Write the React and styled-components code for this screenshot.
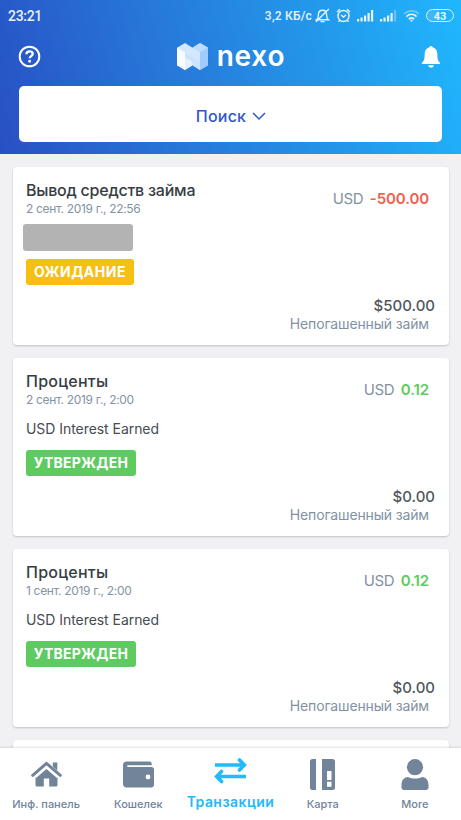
import React from "react";
import styled, { createGlobalStyle } from "styled-components";

const Global = createGlobalStyle`
  * { box-sizing: border-box; }
  html, body { margin: 0; padding: 0; overflow: hidden; }
  svg { display: block; flex: none; }
`;

const Screen = styled.div`
  width: 461px;
  height: 820px;
  overflow: hidden;
  display: flex;
  flex-direction: column;
  background: #f1f1f3;
  font-family: Inter, "Noto Sans", sans-serif;
  white-space: nowrap;
`;

const Header = styled.header`
  flex: none;
  height: 154px;
  background: linear-gradient(74deg, #2850c4 0%, #2778d9 38%, #2398ea 70%, #20b7fd 100%);
  color: #fff;
`;

const StatusBar = styled.div`
  height: 31px;
  padding: 0 7px 0 8px;
  display: flex;
  align-items: center;
  justify-content: space-between;
  font-family: Roboto, sans-serif;
  font-weight: 500;
  color: #e9f3fd;
`;

const Clock = styled.span`
  font-size: 14px;
  letter-spacing: -0.3px;
`;

const StatusIcons = styled.div`
  display: flex;
  align-items: center;
  gap: 6px;
`;

const Speed = styled.span`
  font-size: 12px;
  letter-spacing: 0.2px;
  margin-right: -3px;
`;

const TitleBar = styled.div`
  height: 55px;
  padding: 0 20px 4px 18px;
  display: flex;
  align-items: center;
  justify-content: space-between;
`;

const Brand = styled.div`
  display: flex;
  align-items: center;
  gap: 9px;
`;

const BrandName = styled.span`
  height: 34px;
  line-height: 32px;
  font-size: 28px;
  font-weight: 600;
  letter-spacing: 0.8px;
`;

const SearchButton = styled.button`
  display: flex;
  align-items: center;
  justify-content: center;
  gap: 6px;
  width: 423px;
  height: 56px;
  margin: 0 0 0 19px;
  padding: 4px 0 0 1px;
  border: 0;
  border-radius: 5px;
  background: #fff;
  color: #3158c8;
  font: 500 16px Inter, sans-serif;
  letter-spacing: 0.2px;
`;

const List = styled.main`
  flex: 1;
  min-height: 0;
  overflow: hidden;
  padding: 13px 12.5px 0 12.5px;
  display: flex;
  flex-direction: column;
  gap: 13px;
`;

const Card = styled.article`
  flex: none;
  height: 178px;
  padding: 14px 13.5px 12px;
  display: flex;
  justify-content: space-between;
  background: #fff;
  border-radius: 4px;
  box-shadow: 0 1px 2px rgba(40, 45, 60, 0.24);
`;

const Details = styled.div`
  display: flex;
  flex-direction: column;
  align-items: flex-start;
`;

const Title = styled.h2`
  margin: 0;
  height: 19px;
  line-height: 19px;
  font-size: 16px;
  font-weight: 500;
  letter-spacing: ${(p) => p.$track || "0"};
  color: #353d43;
`;

const DateText = styled.time`
  height: 17px;
  line-height: 17px;
  font-size: 12px;
  letter-spacing: -0.32px;
  color: #8393a3;
`;

const Note = styled.p`
  margin: 12px 0 0;
  height: 18px;
  line-height: 18px;
  font-size: 14px;
  letter-spacing: -0.05px;
  color: #454c52;
`;

const Redacted = styled.div`
  width: 110px;
  height: 27px;
  margin: 7px 0 -4px -3px;
  border-radius: 3px;
  background: #b3b3b3;
`;

const Badge = styled.span`
  width: ${(p) => p.$width};
  height: 26px;
  margin-top: 12px;
  padding-bottom: 1px;
  border-radius: 3px;
  display: flex;
  align-items: center;
  justify-content: center;
  font-size: 14px;
  font-weight: 700;
  letter-spacing: ${(p) => p.$track || "0"};
  color: #fff;
  background: ${(p) => p.$color};
`;

const Amounts = styled.div`
  display: flex;
  flex-direction: column;
  align-items: flex-end;
  justify-content: space-between;
`;

const Amount = styled.div`
  display: flex;
  gap: 6.5px;
  margin: 8px 6px 0 0;
  font-size: 15px;
  line-height: 19px;
  letter-spacing: -0.4px;
  color: #8292a2;
`;

const Value = styled.span`
  font-weight: 600;
  letter-spacing: -0.1px;
  color: ${(p) => p.$color};
`;

const Total = styled.div`
  line-height: 18px;
  font-size: 15px;
  font-weight: 500;
  text-align: right;
  color: #50575e;
`;

const Caption = styled.div`
  line-height: 18px;
  margin-right: 6px;
  font-size: 14px;
  letter-spacing: -0.15px;
  color: #8292a2;
`;

const Nav = styled.nav`
  flex: none;
  height: 72px;
  display: grid;
  grid-template-columns: repeat(5, 1fr);
  background: #fff;
  box-shadow: 0 -1px 2px rgba(40, 45, 60, 0.12);
`;

const NavItem = styled.a`
  display: flex;
  flex-direction: column;
  align-items: center;
  color: ${(p) => (p.$active ? "#23b9fa" : "#718499")};
`;

const NavIcon = styled.span`
  height: ${(p) => (p.$active ? "45px" : "48px")};
  padding-top: ${(p) => (p.$active ? "0" : "4px")};
  display: flex;
  align-items: center;
`;

const NavLabel = styled.span`
  line-height: 17px;
  font-size: ${(p) => (p.$active ? "14px" : "11px")};
  font-weight: ${(p) => (p.$active ? 600 : 500)};
  letter-spacing: ${(p) => (p.$active ? "0.45px" : "0")};
`;

const HelpIcon = () => (
  <svg width="23" height="23" viewBox="0 0 23 23" fill="none" stroke="#fff">
    <circle cx="11.5" cy="11.5" r="9.8" strokeWidth="2" />
    <path d="M8.4 9.2C8.5 7.3 9.8 6.3 11.6 6.3c1.8 0 3.1 1 3.1 2.6 0 2.1-3 2.3-3 4.3" strokeWidth="2.3" />
    <circle cx="11.6" cy="16.2" r="0.7" strokeWidth="1.5" />
  </svg>
);

const NexoMark = () => (
  <svg width="31" height="27" viewBox="0 0 31 27">
    <path d="M0 4.7L8 0l7.500 4.700L23 0l8 4.700v17.600L23 27l-7.500-4.700L8 27l-8-4.700z" fill="#d3e8ff" />
    <path d="M0 4.700l8 4.800V27l-8-4.700z" fill="#fafdff" />
    <path d="M8 9.500l7.500 4.500v8.300L8 27z" fill="#e3f1ff" />
    <path d="M15.500 4.700L23 0l8 4.700-8 4.600z" fill="#bddcff" />
    <path d="M31 4.700v17.600L23 27V9.300z" fill="#a0cbff" />
    <path d="M8 9.500l15 9V27l-7.500-4.700V19L8 14.500z" fill="#cbe3ff" />
  </svg>
);

const BellIcon = () => (
  <svg width="20" height="23" viewBox="0 0 20 23" fill="#fff">
    <path d="M8.4 2.2a1.7 1.7 0 0 1 3.3 0c3.1.8 4.5 3.2 4.6 6.4.1 5.3.6 7.4 2.7 9.2.5.5.3 1.2-.5 1.2h-17c-.8 0-1-.7-.5-1.2 2.1-1.8 2.6-3.9 2.7-9.2.1-3.2 1.6-5.6 4.7-6.4zM7.2 20.3h5.7c-.3 1.5-1.3 2.3-2.8 2.3s-2.6-.8-2.9-2.3z" />
  </svg>
);

const MutedBell = () => (
  <svg width="15" height="15" viewBox="0 0 15 15" fill="none" stroke="#e6f3ff" strokeWidth="1.4">
    <path d="M1.500 11.800h12c-1.600-1.100-1.900-2.500-1.900-4.900 0-2.800-1.500-4.600-4.100-4.600S3.400 4.100 3.400 6.900c0 2.400-.300 3.800-1.900 4.900zM5.500 13.600h4M1 13.800L13.800 1" />
  </svg>
);

const AlarmIcon = () => (
  <svg width="15" height="15" viewBox="0 0 15 15" fill="none" stroke="#e6f3ff" strokeWidth="1.4">
    <circle cx="7.500" cy="8" r="5.500" />
    <path d="M1 4l3-2.700M14 4l-3-2.700M5 7l2.500 2L10 7M3.500 12.500l-1 1.200M11.500 12.500l1 1.200" />
  </svg>
);

const Signal = ({ weak }) => (
  <svg width="17" height="13" viewBox="0 0 17 13" fill="#e6f3ff">
    <path d="M0 10h2.200v2.500H0zM3.500 8.600h2.200v3.900H3.500zM7 6.500h2.200v6H7zM10.500 4h2.200v8.500h-2.200z" />
    <path d="M14 1h2.200v11.500H14z" opacity={weak ? 0.35 : 1} />
  </svg>
);

const WifiIcon = () => (
  <svg width="17" height="14" viewBox="0 0 17 14" fill="none" stroke="#e6f3ff" strokeWidth="1.700">
    <path d="M1 5c4.500-4.300 10.500-4.300 15 0" opacity="0.400" />
    <path d="M3.400 7.600c3-2.900 7.200-2.900 10.200 0M5.800 10.200c1.700-1.500 3.700-1.500 5.400 0" />
    <path d="M6.700 11.300h3.600L8.500 13z" fill="#e6f3ff" stroke="none" />
  </svg>
);

const Battery = styled.span`
  width: 28px;
  height: 13px;
  display: flex;
  align-items: center;
  justify-content: center;
  padding-top: 1px;
  border: 1.5px solid #d9f0ff;
  border-radius: 7px;
  background: linear-gradient(90deg, #45b4f4 45%, transparent 45%);
  font-size: 11px;
  line-height: 11px;
  font-weight: 700;
`;

const Chevron = () => (
  <svg width="14" height="9" viewBox="0 0 14 9" fill="none" stroke="#3158c8" strokeWidth="1.500">
    <path d="M1 1l6 6 6-6" />
  </svg>
);

const HomeIcon = () => (
  <svg width="31" height="26" viewBox="0 0 31 26" fill="currentColor">
    <path d="M15.500 6.800L26.500 16v8a1.500 1.500 0 0 1-1.500 1.500h-6.800v-8h-5.400v8H6A1.500 1.500 0 0 1 4.500 24v-8z" />
    <path d="M21.800 1.500h4.500v8l-4.500-4z" />
    <path d="M15.500 5.200L3.500 15.300l1.500 1.700 10.500-8.900L26 17l1.500-1.700z" fill="#fff" />
    <path d="M1.700 14.300l13.800-11.900 13.800 11.900" fill="none" stroke="currentColor" strokeWidth="3" strokeLinecap="round" strokeLinejoin="round" />
  </svg>
);

const WalletIcon = () => (
  <svg width="31" height="27" viewBox="0 0 31 27" fill="currentColor">
    <path d="M3.500.500h23c1.200 0 2.200.900 2.200 2.300v1.500H5c-1.300 0-1.300 1.600 0 1.600h23.500c1.500 0 2.500 1 2.500 2.500v15.100c0 1.700-1.100 3-2.800 3H3.500c-2 0-3.500-1.500-3.500-3.500V4C0 2 1.500.500 3.500.500z" />
    <circle cx="25" cy="16" r="2.400" fill="#fff" />
  </svg>
);

const TransferIcon = () => (
  <svg width="33" height="27" viewBox="0 0 33 27" fill="none" stroke="currentColor" strokeWidth="3.700">
    <path d="M1 8h28.500M32 19.500H3.500" />
    <path d="M25.500 3l4.800 5-4.800 5M7.500 14.500l-4.800 5 4.800 5" strokeLinecap="round" />
  </svg>
);

const CardIcon = () => (
  <svg width="25" height="31" viewBox="0 0 25 31" fill="currentColor">
    <path d="M2.500 0H6v31H2.500A2.500 2.500 0 0 1 0 28.500v-26A2.500 2.500 0 0 1 2.500 0z" />
    <path fillRule="evenodd" d="M12 0h10.500A2.500 2.500 0 0 1 25 2.500v26a2.500 2.500 0 0 1-2.500 2.500H12zM17 12v9h4.500v-9zM17 22.800v5h4.500v-5z" />
  </svg>
);

const UserIcon = () => (
  <svg width="28" height="31" viewBox="0 0 28 31" fill="currentColor">
    <circle cx="14" cy="8.200" r="8.100" />
    <path d="M7 18c4.500 2.100 9.500 2.100 14 0 4.300.200 6.500 3.500 6.500 8v2.500c0 1.500-1 2.500-2.500 2.500H3C1.500 31 .500 30 .500 28.500V26c0-4.500 2.200-7.800 6.500-8z" />
  </svg>
);

const green = "#5ecb61";

const transactions = [
  { title: "Вывод средств займа", track: "-0.23px", date: "2 сент. 2019 г., 22:56", status: "ОЖИДАНИЕ", badgeColor: "#f6c013", badgeWidth: "108px", badgeTrack: "0.5px", value: "-500.00", valueColor: "#f05f50", total: "$500.00" },
  { title: "Проценты", track: "0.25px", date: "2 сент. 2019 г., 2:00", note: "USD Interest Earned", status: "УТВЕРЖДЕН", badgeColor: green, badgeWidth: "110px", badgeTrack: "0.25px", value: "0.12", valueColor: green, total: "$0.00" },
  { title: "Проценты", track: "0.25px", date: "1 сент. 2019 г., 2:00", note: "USD Interest Earned", status: "УТВЕРЖДЕН", badgeColor: green, badgeWidth: "110px", badgeTrack: "0.25px", value: "0.12", valueColor: green, total: "$0.00" },
];

const tabs = [
  { label: "Инф. панель", Icon: HomeIcon },
  { label: "Кошелек", Icon: WalletIcon },
  { label: "Транзакции", Icon: TransferIcon, active: true },
  { label: "Карта", Icon: CardIcon },
  { label: "More", Icon: UserIcon },
];

export default function App() {
  return (
    <Screen>
      <Global />
      <Header>
        <StatusBar>
          <Clock>23:21</Clock>
          <StatusIcons>
            <Speed>3,2 КБ/с</Speed>
            <MutedBell />
            <AlarmIcon />
            <Signal />
            <Signal weak />
            <WifiIcon />
            <Battery>43</Battery>
          </StatusIcons>
        </StatusBar>
        <TitleBar>
          <HelpIcon />
          <Brand>
            <NexoMark />
            <BrandName>nexo</BrandName>
          </Brand>
          <BellIcon />
        </TitleBar>
        <SearchButton>
          Поиск
          <Chevron />
        </SearchButton>
      </Header>
      <List>
        {transactions.map((t, i) => (
          <Card key={i}>
            <Details>
              <Title $track={t.track}>{t.title}</Title>
              <DateText>{t.date}</DateText>
              {t.note ? <Note>{t.note}</Note> : <Redacted />}
              <Badge $color={t.badgeColor} $width={t.badgeWidth} $track={t.badgeTrack}>{t.status}</Badge>
            </Details>
            <Amounts>
              <Amount>
                USD <Value $color={t.valueColor}>{t.value}</Value>
              </Amount>
              <div>
                <Total>{t.total}</Total>
                <Caption>Непогашенный займ</Caption>
              </div>
            </Amounts>
          </Card>
        ))}
        <Card />
      </List>
      <Nav>
        {tabs.map(({ label, Icon, active }) => (
          <NavItem key={label} $active={active}>
            <NavIcon $active={active}><Icon /></NavIcon>
            <NavLabel $active={active}>{label}</NavLabel>
          </NavItem>
        ))}
      </Nav>
    </Screen>
  );
}
